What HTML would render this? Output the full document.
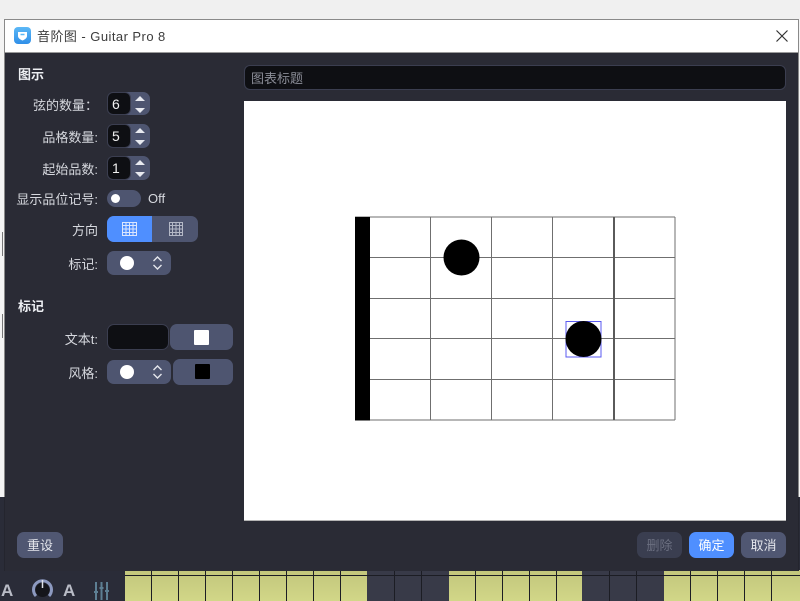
<!DOCTYPE html>
<html><head><meta charset="utf-8"><style>
*{box-sizing:border-box}
html,body{margin:0;padding:0}
body{width:800px;height:601px;position:relative;overflow:hidden;background:#f0f0f0;font-family:"Liberation Sans","WenQuanYi Zen Hei","Noto Sans CJK SC",sans-serif;filter:blur(.3px)}
.a{position:absolute}
.l{position:absolute;color:#d6d8de;font-size:13px;line-height:16px;text-align:right;right:702px;white-space:nowrap}
.h{position:absolute;left:18px;color:#eceef2;font-size:13px;font-weight:bold;line-height:16px}
.b{position:absolute;background:#4e5570;border-radius:7px}
.in{position:absolute;background:#0e0f13;border:1px solid #3b3e50;border-radius:6px}
.btn{position:absolute;top:532px;height:26px;border-radius:7px;background:#505772;color:#e4e6ec;font-size:13px;line-height:28px;text-align:center}
.n{font-size:14px}
</style></head><body>
<div class="a" style="left:0;top:19px;width:5px;height:478px;background:#f4f4f4"></div>
<div class="a" style="left:2px;top:232px;width:1px;height:24px;background:#777"></div>
<div class="a" style="left:2px;top:314px;width:1px;height:24px;background:#777"></div>
<div class="a" style="left:798px;top:19px;width:2px;height:478px;background:#f4f4f4"></div>
<div class="a" style="left:0;top:497px;width:800px;height:104px;background:#2a2c38"></div>

<div class="a" style="left:125px;top:570px;width:242px;height:31px;background:linear-gradient(#c2c67c,#d2d788)"></div>
<div class="a" style="left:367px;top:570px;width:82px;height:31px;background:#383a48"></div>
<div class="a" style="left:449px;top:570px;width:133px;height:31px;background:linear-gradient(#c2c67c,#d2d788)"></div>
<div class="a" style="left:582px;top:570px;width:82px;height:31px;background:#383a48"></div>
<div class="a" style="left:664px;top:570px;width:136px;height:31px;background:linear-gradient(#c2c67c,#d2d788)"></div>
<svg class="a" style="left:0;top:570px" width="800" height="31">
<g stroke="#1c1d24" stroke-width="1">
<path d="M125 5.500H800M151.500 0V31M178.500 0V31M205.500 0V31M232.500 0V31M259.500 0V31M286.500 0V31M313.500 0V31M340.500 0V31M394.500 0V31M421.500 0V31M475.500 0V31M502.500 0V31M529.500 0V31M556.500 0V31M609.500 0V31M636.500 0V31M690.500 0V31M717.500 0V31M744.500 0V31M771.500 0V31"/>
</g>
<path d="M36 26a9 9 0 1 1 13 0" fill="none" stroke="#8d9ac0" stroke-width="3"/>
<circle cx="42.500" cy="20" r="7" fill="#15161b"/>
<path d="M42.500 10v8" stroke="#dfe2ea" stroke-width="1.500"/>
<g stroke="#5d7f93" stroke-width="2" fill="none"><path d="M96 12v18M101.500 12v18M107 12v18M94 22h4M99.500 18h4M105 21h4"/></g>
<text x="1" y="26" font-family="Liberation Sans" font-weight="bold" font-size="17" fill="#b9bcc6">A</text>
<text x="63" y="26" font-family="Liberation Sans" font-weight="bold" font-size="17" fill="#b9bcc6">A</text>
</svg>

<div class="a" style="left:4px;top:19px;width:795px;height:552px;background:#2a2b35;border:1px solid #8a8a8a;border-bottom:0"></div>
<div class="a" style="left:4px;top:497px;width:1px;height:74px;background:#24252e"></div>
<div class="a" style="left:798px;top:497px;width:1px;height:74px;background:#24252e"></div>
<div class="a" style="left:5px;top:20px;width:793px;height:33px;background:#fff;border-bottom:1px solid #9a9a9a"></div>
<div class="a" style="left:14px;top:27px;width:17px;height:17px;border-radius:4px;background:linear-gradient(#5cb8f6,#2f8fe8)"></div>
<svg class="a" style="left:14px;top:27px" width="17" height="17"><path d="M4 5h9v4c0 2-2 3.500-4.500 4.500C6 12.500 4 11 4 9z" fill="#fff"/><path d="M6.500 7.500h4" stroke="#5cb8f6" stroke-width="1.500"/></svg>
<div class="a" style="left:37px;top:28px;color:#3c3c3c;font-size:13px;line-height:18px;white-space:nowrap;letter-spacing:.45px">音阶图 - Guitar Pro 8</div>
<svg class="a" style="left:774px;top:28px" width="16" height="16"><path d="M2.500 2.500l11 11M13.500 2.500l-11 11" stroke="#333" stroke-width="1.200"/></svg>

<div class="h" style="top:67px">图示</div>
<div class="l" style="top:98px">弦的数量：</div>
<div class="l" style="top:130px">品格数量:</div>
<div class="l" style="top:162px">起始品数:</div>
<div class="l" style="top:192px">显示品位记号:</div>
<div class="l" style="top:223px">方向</div>
<div class="l" style="top:257px">标记:</div>
<div class="h" style="top:299px">标记</div>
<div class="l" style="top:332px">文本t:</div>
<div class="l" style="top:366px">风格:</div>

<div class="b" style="left:107px;top:92px;width:43px;height:23px"></div>
<div class="in n" style="left:107px;top:92px;width:24px;height:23px;color:#f0f0f0;line-height:22px;padding-left:4px;background:#0e0f13">6</div>
<div class="b" style="left:107px;top:124px;width:43px;height:24px"></div>
<div class="in n" style="left:107px;top:124px;width:24px;height:24px;color:#f0f0f0;line-height:23px;padding-left:4px">5</div>
<div class="b" style="left:107px;top:156px;width:43px;height:24px"></div>
<div class="in n" style="left:107px;top:156px;width:24px;height:24px;color:#f0f0f0;line-height:23px;padding-left:4px">1</div>
<svg class="a" style="left:132px;top:92px" width="18" height="90">
<g fill="#e8eaf0"><path d="M3 9l5-5 5 5zM3 16h10l-5 5zM3 41l5-5 5 5zM3 48h10l-5 5zM3 73l5-5 5 5zM3 80h10l-5 5z"/></g>
</svg>

<div class="b" style="left:107px;top:190px;width:34px;height:17px;border-radius:9px"></div>
<div class="a" style="left:111px;top:194px;width:9px;height:9px;border-radius:50%;background:#fff"></div>
<div class="a" style="left:148px;top:191px;color:#d6d8de;font-size:13px;line-height:16px">Off</div>

<div class="b" style="left:107px;top:216px;width:91px;height:26px"></div>
<div class="a" style="left:107px;top:216px;width:45px;height:26px;background:#4f8fff;border-radius:7px 0 0 7px"></div>
<svg class="a" style="left:107px;top:216px" width="91" height="26">
<g fill="none" stroke="#dbe6ff" stroke-width="1"><path d="M15.500 6.500h14v13h-14zM19 6.500v13M22.500 6.500v13M26 6.500v13M15.500 9.500h14M15.500 13h14M15.500 16.500h14"/></g>
<g fill="none" stroke="#b4b8c6" stroke-width="1"><path d="M62.500 6.500h13v13h-13zM65.500 6.500v13M69 6.500v13M72.500 6.500v13M62.500 9.500h13M62.500 13h13M62.500 16.500h13"/></g>
</svg>

<div class="b" style="left:107px;top:251px;width:64px;height:24px"></div>
<div class="a" style="left:120px;top:256px;width:14px;height:14px;border-radius:50%;background:#fff"></div>
<svg class="a" style="left:151px;top:255px" width="13" height="16"><path d="M2.500 6l4-4 4 4M2.500 10l4 4 4-4" fill="none" stroke="#e4e6ec" stroke-width="1.400"/></svg>

<div class="in" style="left:107px;top:324px;width:62px;height:26px;border-radius:7px"></div>
<div class="b" style="left:170px;top:324px;width:63px;height:26px"></div>
<div class="a" style="left:194px;top:330px;width:15px;height:15px;background:#fff;border-radius:1px"></div>

<div class="b" style="left:107px;top:360px;width:64px;height:24px"></div>
<div class="a" style="left:120px;top:365px;width:14px;height:14px;border-radius:50%;background:#fff"></div>
<svg class="a" style="left:151px;top:364px" width="13" height="16"><path d="M2.500 6l4-4 4 4M2.500 10l4 4 4-4" fill="none" stroke="#e4e6ec" stroke-width="1.400"/></svg>
<div class="b" style="left:173px;top:359px;width:60px;height:26px"></div>
<div class="a" style="left:195px;top:364px;width:15px;height:15px;background:#000;border-radius:1px"></div>

<div class="in" style="left:244px;top:65px;width:542px;height:25px;color:#8a8c96;font-size:13px;line-height:25px;padding-left:6px">图表标题</div>

<div class="a" style="left:244px;top:101px;width:542px;height:420px;background:#fff;border-bottom:1px solid #b5b5b5"></div>
<svg class="a" style="left:244px;top:101px" width="542" height="420">
<g stroke="#6f6f6f" stroke-width="1" fill="none">
<path d="M111 116H431M111 156.500H431M111 197.500H431M111 237.500H431M111 278.500H431M111 319H431"/>
<path d="M186.500 116V319M247.500 116V319M308.500 116V319M431 116V319"/>
</g>
<path d="M370 116V319" stroke="#5a5a5a" stroke-width="2"/>
<rect x="111" y="116" width="15" height="203.500" fill="#000"/>
<circle cx="217.500" cy="156.500" r="18" fill="#000"/>
<rect x="322" y="220.500" width="35" height="35.500" fill="none" stroke="#5a5af0" stroke-width="1"/>
<circle cx="339.500" cy="238" r="18" fill="#000"/>
</svg>

<div class="btn" style="left:17px;width:46px">重设</div>
<div class="btn" style="left:637px;width:45px;background:#3a3e50;color:#6b6f80">删除</div>
<div class="btn" style="left:689px;width:45px;background:#4f8fff;color:#fff">确定</div>
<div class="btn" style="left:741px;width:45px">取消</div>
</body></html>
